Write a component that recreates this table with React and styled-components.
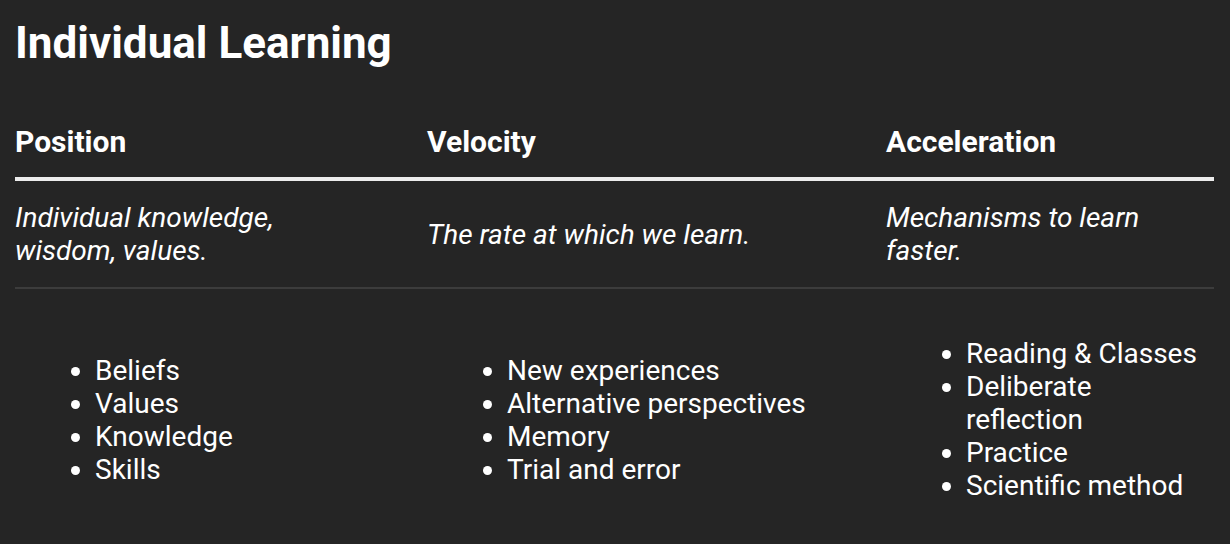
import React from "react";
import styled, { createGlobalStyle } from "styled-components";

const GlobalStyle = createGlobalStyle`
  html, body {
    margin: 0;
    padding: 0;
    background: #252525;
  }
  body {
    font-family: Roboto, "Liberation Sans", sans-serif;
    color: #fff;
  }
`;

const Slide = styled.div`
  width: 1230px;
  height: 544px;
  overflow: hidden;
  box-sizing: border-box;
  padding: 17px 15px 0 15px;
  background: #252525;
`;

const Title = styled.h1`
  margin: 0 0 36px 0;
  font-size: 44px;
  line-height: 52px;
  font-weight: 700;
  color: #fff;
`;

const Table = styled.div`
  width: 1199px;
`;

const Row = styled.div`
  display: grid;
  grid-template-columns: 352px 399px 1fr;
  column-gap: 60px;
  align-items: center;
  padding: ${(p) => p.$pad || "20px 0"};
  border-bottom: ${(p) => p.$border || "none"};
`;

const Head = styled.div`
  font-size: 30px;
  font-weight: 700;
  line-height: 35px;
`;

const Description = styled.div`
  font-size: 28px;
  font-style: italic;
  line-height: 33px;
`;

const List = styled.ul`
  margin: 28px 0;
  padding-left: 80px;
  list-style: disc;
  font-size: 28px;
  line-height: 33px;
`;

const columns = [
  {
    head: "Position",
    text: "Individual knowledge, wisdom, values.",
    items: ["Beliefs", "Values", "Knowledge", "Skills"],
  },
  {
    head: "Velocity",
    text: "The rate at which we learn.",
    items: ["New experiences", "Alternative perspectives", "Memory", "Trial and error"],
  },
  {
    head: "Acceleration",
    text: "Mechanisms to learn faster.",
    items: ["Reading & Classes", "Deliberate reflection", "Practice", "Scientific method"],
  },
];

export default function App() {
  return (
    <Slide>
      <GlobalStyle />
      <Title>Individual Learning</Title>
      <Table>
        <Row $pad="19px 0 18px 0" $border="4px solid #ececec">
          {columns.map((c) => (
            <Head key={c.head}>{c.head}</Head>
          ))}
        </Row>
        <Row $border="2px solid #3c3c3c">
          {columns.map((c) => (
            <Description key={c.head}>{c.text}</Description>
          ))}
        </Row>
        <Row>
          {columns.map((c) => (
            <List key={c.head}>
              {c.items.map((item) => (
                <li key={item}>{item}</li>
              ))}
            </List>
          ))}
        </Row>
      </Table>
    </Slide>
  );
}
